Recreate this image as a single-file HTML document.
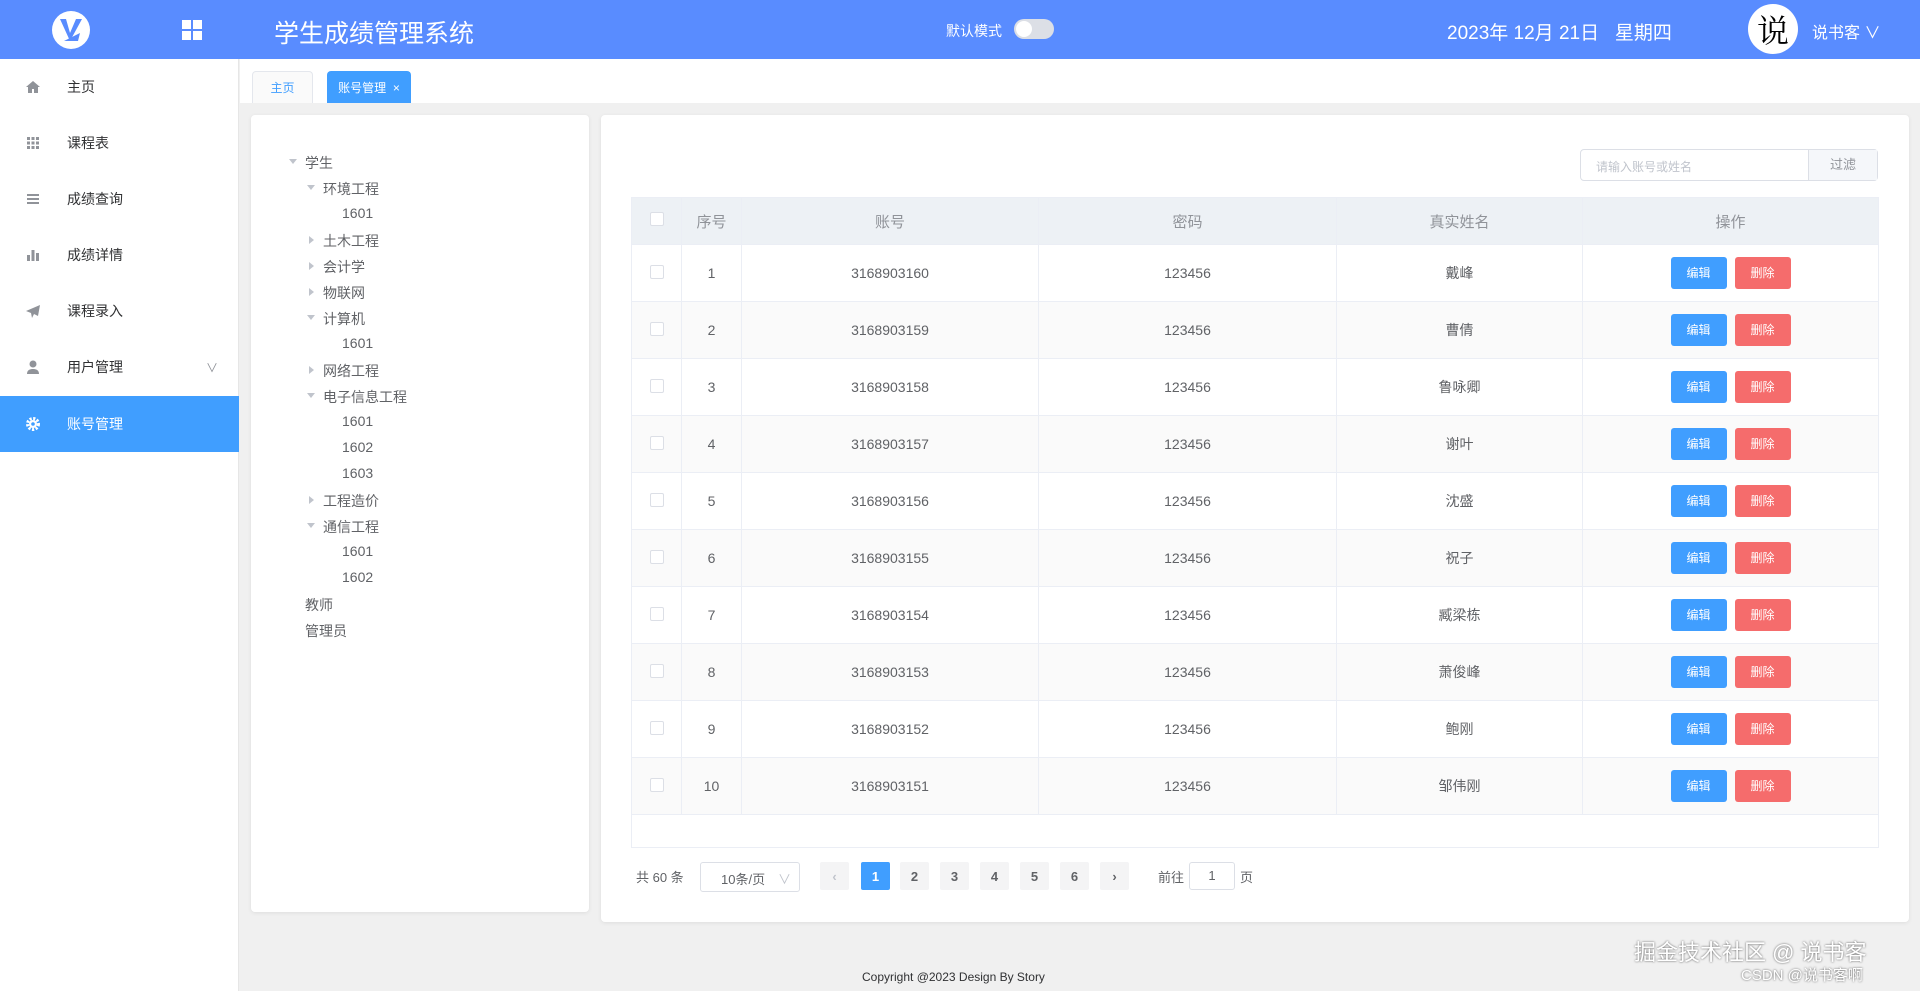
<!DOCTYPE html>
<html><head><meta charset="utf-8"><style>
*{margin:0;padding:0;box-sizing:border-box}
body{width:1920px;height:991px;overflow:hidden;font-family:"Liberation Sans","Noto Sans CJK SC",sans-serif;background:#f0f0f0;position:relative;color:#606266}
.abs{position:absolute}
#hdr{left:0;top:0;width:1920px;height:59px;background:#598cff;color:#fff}
#side{left:0;top:59px;width:239px;height:932px;background:#fff;border-right:1px solid #e6e6e6}
.mi{position:absolute;left:0;width:239px;height:56px;font-size:14px;color:#303133;display:flex;align-items:center}
.mi .ic{position:absolute;left:25px;width:16px;height:16px}
.mi span{position:absolute;left:67px}
.mi.act{background:#409eff;color:#fff}
#tabs{left:240px;top:59px;width:1680px;height:44px;background:#fff}
.tab{position:absolute;top:12px;height:32px;font-size:12px;display:flex;align-items:center;justify-content:center;border:1px solid #e4e7ed;border-bottom:none;border-radius:4px 4px 0 0}
.panel{background:#fff;border-radius:4px;box-shadow:0 1px 4px rgba(0,0,0,.08)}
.tr{position:absolute;font-size:14px;color:#606266}
.tri{position:absolute;width:0;height:0}
.down{border-left:4px solid transparent;border-right:4px solid transparent;border-top:5px solid #c0c4cc}
.right{border-top:4px solid transparent;border-bottom:4px solid transparent;border-left:5px solid #c0c4cc}
table{border-collapse:collapse;position:absolute;left:631px;top:197px;width:1248px;font-size:14px;color:#606266}
td,th{border:1px solid #ebeef5;text-align:center;height:57px;font-weight:normal}
th{height:47px;background:#edf1f5;color:#909399;font-size:15px}
tr:nth-child(odd) td{background:#fafafa}
.cb{display:inline-block;width:14px;height:14px;border:1px solid #dcdfe6;border-radius:2px;background:#fff}
.btn{display:inline-block;width:56px;height:32px;line-height:32px;color:#fff;font-size:12px;border-radius:3px;margin:0 4px}
.pg{position:absolute;top:862px;width:29px;height:28px;background:#f4f4f5;border-radius:2px;font-size:13px;font-weight:bold;color:#606266;display:flex;align-items:center;justify-content:center}
</style></head><body>
<div id="hdr" class="abs">
 <svg class="abs" style="left:50px;top:9px" width="42" height="42" viewBox="0 0 42 42"><circle cx="21" cy="21" r="19" fill="#fff"/><path d="M10 10 L20 32 L32 10 L26 10 L20 24 L16 10Z" fill="#598cff"/><path d="M14 32 L30 24 L28 32Z" fill="#598cff"/></svg>
 <div class="abs" style="left:182px;top:20px;width:20px;height:20px;display:grid;grid-template-columns:9px 9px;gap:2px"><i style="background:#fff"></i><i style="background:#fff"></i><i style="background:#fff"></i><i style="background:#fff"></i></div>
 <div class="abs" style="left:274px;top:14px;font-size:25px">学生成绩管理系统</div>
 <div class="abs" style="left:946px;top:21px;font-size:14px">默认模式</div>
 <div class="abs" style="left:1014px;top:19px;width:40px;height:20px;border-radius:10px;background:#dcdfe6"><div style="position:absolute;left:2px;top:2px;width:16px;height:16px;border-radius:50%;background:#fff"></div></div>
 <div class="abs" style="left:1447px;top:18px;font-size:19px">2023年 12月 21日&nbsp;&nbsp;&nbsp;星期四</div>
 <div class="abs" style="left:1748px;top:4px;width:50px;height:50px;border-radius:50%;background:#fff;color:#000;font-size:32px;text-align:center;line-height:50px;font-family:'Noto Serif CJK SC',serif">说</div>
 <div class="abs" style="left:1812px;top:19px;font-size:16px">说书客 ∨</div>
</div>
<div id="side" class="abs">
 <div class="mi" style="top:0"><svg class="ic" viewBox="0 0 16 16"><path d="M8 2L1 8h2v6h4v-4h2v4h4V8h2z" fill="#909399"/></svg><span>主页</span></div>
 <div class="mi" style="top:56px"><svg class="ic" viewBox="0 0 16 16" fill="#909399"><rect x="2" y="2" width="3" height="3"/><rect x="6.5" y="2" width="3" height="3"/><rect x="11" y="2" width="3" height="3"/><rect x="2" y="6.5" width="3" height="3"/><rect x="6.5" y="6.5" width="3" height="3"/><rect x="11" y="6.5" width="3" height="3"/><rect x="2" y="11" width="3" height="3"/><rect x="6.5" y="11" width="3" height="3"/><rect x="11" y="11" width="3" height="3"/></svg><span>课程表</span></div>
 <div class="mi" style="top:112px"><svg class="ic" viewBox="0 0 16 16" fill="#909399"><rect x="2" y="3" width="12" height="2"/><rect x="2" y="7" width="12" height="2"/><rect x="2" y="11" width="12" height="2"/></svg><span>成绩查询</span></div>
 <div class="mi" style="top:168px"><svg class="ic" viewBox="0 0 16 16" fill="#909399"><rect x="2" y="8" width="3" height="6"/><rect x="6.5" y="3" width="3" height="11"/><rect x="11" y="6" width="3" height="8"/></svg><span>成绩详情</span></div>
 <div class="mi" style="top:224px"><svg class="ic" viewBox="0 0 16 16" fill="#909399"><path d="M15 2L1 8l5 2 1 5 2-4 4 2z"/></svg><span>课程录入</span></div>
 <div class="mi" style="top:280px"><svg class="ic" viewBox="0 0 16 16" fill="#909399"><circle cx="8" cy="5" r="3.5"/><path d="M2 15c0-4 3-5 6-5s6 1 6 5z"/></svg><span>用户管理</span><span style="left:206px;color:#909399;font-size:12px">∨</span></div>
 <div class="mi act" style="top:337px"><svg class="ic" viewBox="0 0 16 16"><circle cx="8" cy="8" r="5.5" fill="none" stroke="#fff" stroke-width="3" stroke-dasharray="2.2 1.5"/><circle cx="8" cy="8" r="4" fill="#fff"/><circle cx="8" cy="8" r="1.8" fill="#409eff"/></svg><span>账号管理</span></div>
</div>
<div id="tabs" class="abs">
 <div class="tab" style="left:12px;width:61px;color:#409eff;background:#fafafa">主页</div>
 <div class="tab" style="left:87px;width:84px;color:#fff;background:#409eff;border-color:#409eff">账号管理&nbsp;&nbsp;×</div>
</div>
<div class="abs panel" style="left:251px;top:115px;width:338px;height:797px"></div>
<div class="tri down" style="left:289px;top:159px"></div><div class="tr" style="left:305px;top:153px">学生</div>
<div class="tri down" style="left:307px;top:185px"></div><div class="tr" style="left:323px;top:179px">环境工程</div>
<div class="tr" style="left:342px;top:205px">1601</div>
<div class="tri right" style="left:309px;top:236px"></div><div class="tr" style="left:323px;top:231px">土木工程</div>
<div class="tri right" style="left:309px;top:262px"></div><div class="tr" style="left:323px;top:257px">会计学</div>
<div class="tri right" style="left:309px;top:288px"></div><div class="tr" style="left:323px;top:283px">物联网</div>
<div class="tri down" style="left:307px;top:315px"></div><div class="tr" style="left:323px;top:309px">计算机</div>
<div class="tr" style="left:342px;top:335px">1601</div>
<div class="tri right" style="left:309px;top:366px"></div><div class="tr" style="left:323px;top:361px">网络工程</div>
<div class="tri down" style="left:307px;top:393px"></div><div class="tr" style="left:323px;top:387px">电子信息工程</div>
<div class="tr" style="left:342px;top:413px">1601</div>
<div class="tr" style="left:342px;top:439px">1602</div>
<div class="tr" style="left:342px;top:465px">1603</div>
<div class="tri right" style="left:309px;top:496px"></div><div class="tr" style="left:323px;top:491px">工程造价</div>
<div class="tri down" style="left:307px;top:523px"></div><div class="tr" style="left:323px;top:517px">通信工程</div>
<div class="tr" style="left:342px;top:543px">1601</div>
<div class="tr" style="left:342px;top:569px">1602</div>
<div class="tr" style="left:305px;top:595px">教师</div>
<div class="tr" style="left:305px;top:621px">管理员</div>
<div class="abs panel" style="left:601px;top:115px;width:1308px;height:807px"></div>
<div class="abs" style="left:1580px;top:149px;width:298px;height:32px;border:1px solid #dcdfe6;border-radius:4px;background:#fff;font-size:12px">
 <span style="position:absolute;left:15px;top:8px;color:#c0c4cc">请输入账号或姓名</span>
 <div style="position:absolute;right:0;top:0;width:69px;height:30px;background:#f5f7fa;border-left:1px solid #dcdfe6;text-align:center;line-height:30px;color:#909399;font-size:13px">过滤</div>
</div>
<table>
<tr><th style="width:50px"><span class="cb"></span></th><th style="width:60px">序号</th><th style="width:297px">账号</th><th style="width:298px">密码</th><th style="width:246px">真实姓名</th><th>操作</th></tr>
<tr><td><span class="cb"></span></td><td>1</td><td>3168903160</td><td>123456</td><td>戴峰</td><td><span class="btn" style="background:#409eff">编辑</span><span class="btn" style="background:#f56c6c">删除</span></td></tr>
<tr><td><span class="cb"></span></td><td>2</td><td>3168903159</td><td>123456</td><td>曹倩</td><td><span class="btn" style="background:#409eff">编辑</span><span class="btn" style="background:#f56c6c">删除</span></td></tr>
<tr><td><span class="cb"></span></td><td>3</td><td>3168903158</td><td>123456</td><td>鲁咏卿</td><td><span class="btn" style="background:#409eff">编辑</span><span class="btn" style="background:#f56c6c">删除</span></td></tr>
<tr><td><span class="cb"></span></td><td>4</td><td>3168903157</td><td>123456</td><td>谢叶</td><td><span class="btn" style="background:#409eff">编辑</span><span class="btn" style="background:#f56c6c">删除</span></td></tr>
<tr><td><span class="cb"></span></td><td>5</td><td>3168903156</td><td>123456</td><td>沈盛</td><td><span class="btn" style="background:#409eff">编辑</span><span class="btn" style="background:#f56c6c">删除</span></td></tr>
<tr><td><span class="cb"></span></td><td>6</td><td>3168903155</td><td>123456</td><td>祝子</td><td><span class="btn" style="background:#409eff">编辑</span><span class="btn" style="background:#f56c6c">删除</span></td></tr>
<tr><td><span class="cb"></span></td><td>7</td><td>3168903154</td><td>123456</td><td>臧梁栋</td><td><span class="btn" style="background:#409eff">编辑</span><span class="btn" style="background:#f56c6c">删除</span></td></tr>
<tr><td><span class="cb"></span></td><td>8</td><td>3168903153</td><td>123456</td><td>萧俊峰</td><td><span class="btn" style="background:#409eff">编辑</span><span class="btn" style="background:#f56c6c">删除</span></td></tr>
<tr><td><span class="cb"></span></td><td>9</td><td>3168903152</td><td>123456</td><td>鲍刚</td><td><span class="btn" style="background:#409eff">编辑</span><span class="btn" style="background:#f56c6c">删除</span></td></tr>
<tr><td><span class="cb"></span></td><td>10</td><td>3168903151</td><td>123456</td><td>邹伟刚</td><td><span class="btn" style="background:#409eff">编辑</span><span class="btn" style="background:#f56c6c">删除</span></td></tr>
</table>
<div class="abs" style="left:631px;top:814px;width:1248px;height:34px;border:1px solid #ebeef5;border-top:none"></div>
<div class="abs" style="left:636px;top:867px;font-size:13px">共 60 条</div>
<div class="abs" style="left:700px;top:862px;width:100px;height:30px;border:1px solid #dcdfe6;border-radius:3px;font-size:13px;padding:6px 0 0 20px">10条/页 <span style="position:absolute;right:8px;color:#c0c4cc">∨</span></div>
<div class="pg" style="left:820px;color:#c0c4cc">‹</div>
<div class="pg" style="left:861px;background:#409eff;color:#fff">1</div>
<div class="pg" style="left:900px">2</div>
<div class="pg" style="left:940px">3</div>
<div class="pg" style="left:980px">4</div>
<div class="pg" style="left:1020px">5</div>
<div class="pg" style="left:1060px">6</div>
<div class="pg" style="left:1100px">›</div>
<div class="abs" style="left:1158px;top:867px;font-size:13px">前往</div>
<div class="abs" style="left:1189px;top:862px;width:46px;height:28px;border:1px solid #dcdfe6;border-radius:3px;font-size:13px;text-align:center;line-height:26px">1</div>
<div class="abs" style="left:1240px;top:867px;font-size:13px">页</div>
<div class="abs" style="left:862px;top:970px;font-size:12px;color:#303133">Copyright @2023 Design By Story</div>
<div class="abs" style="left:1634px;top:935px;font-size:22px;color:#fff;text-shadow:0 0 2px #555">掘金技术社区 @ 说书客</div>
<div class="abs" style="left:1741px;top:964px;font-size:15px;color:#fff;text-shadow:0 0 2px #555">CSDN @说书客啊</div>
</body></html>
